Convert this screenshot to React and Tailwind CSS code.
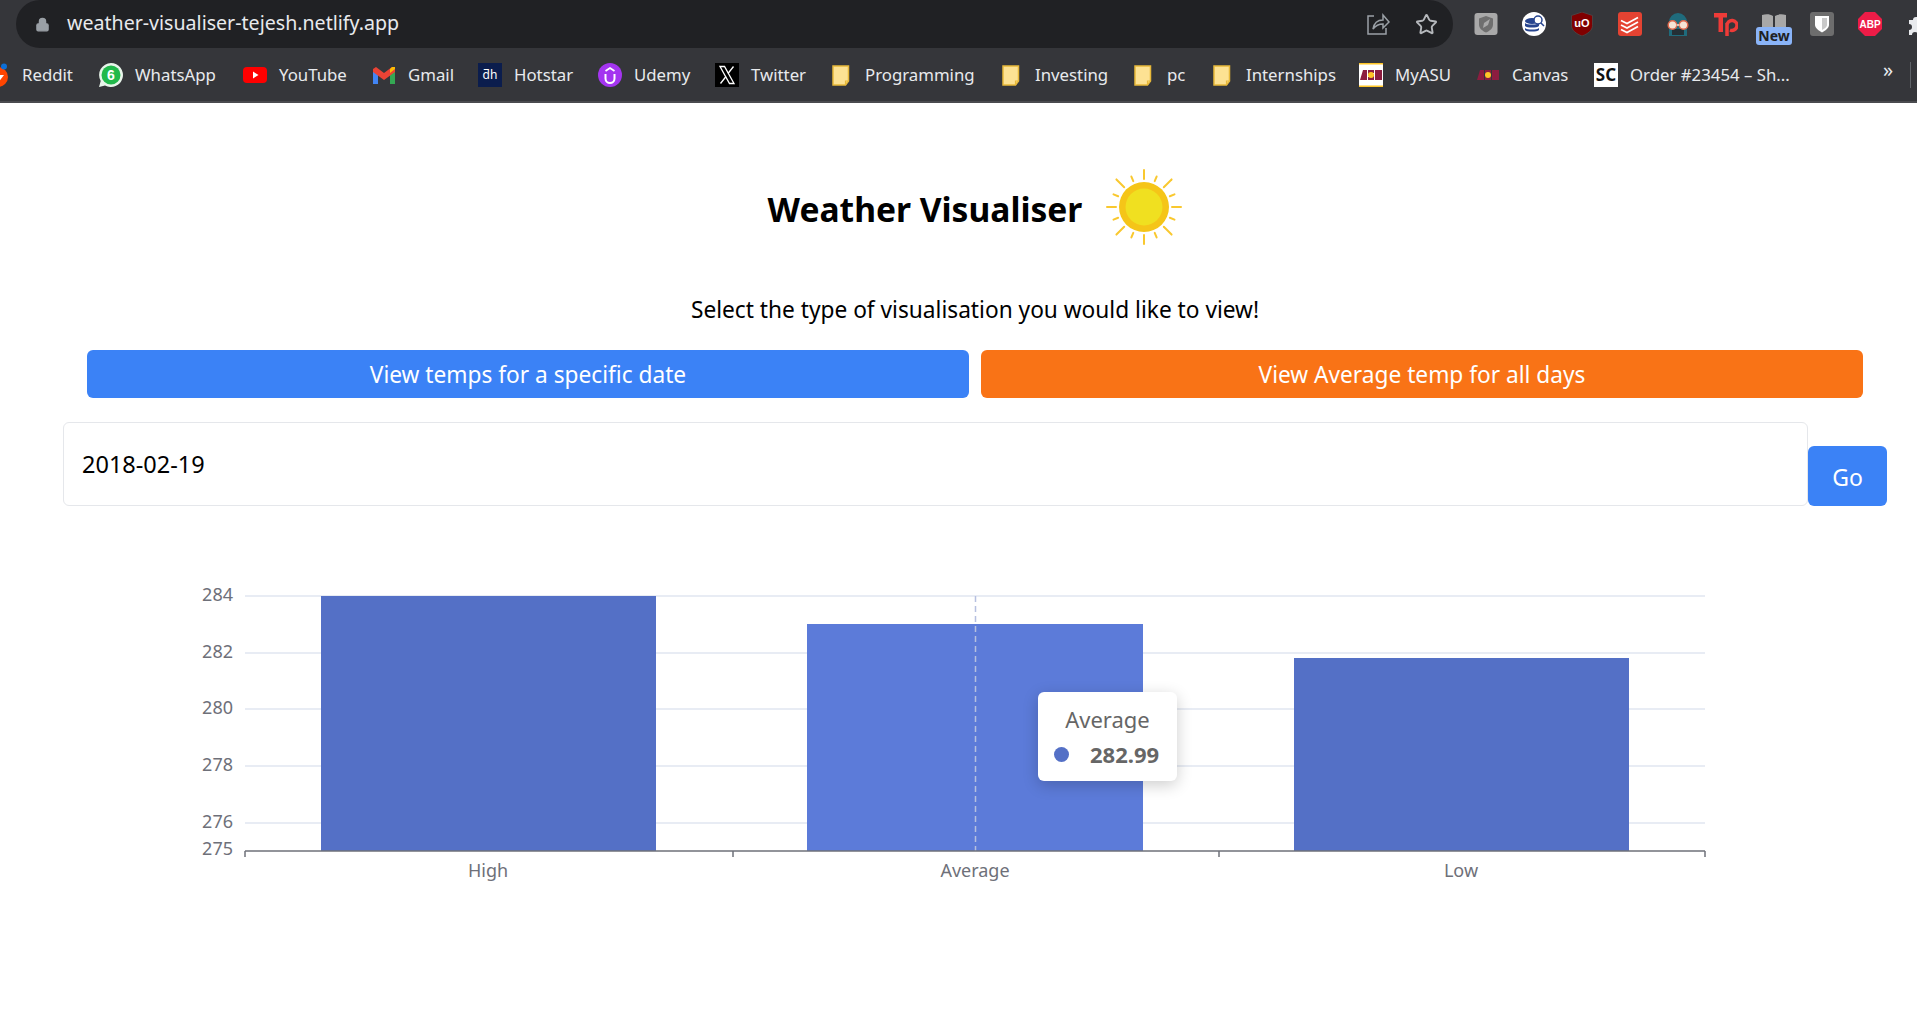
import { Star, Lock } from 'lucide-react'

const Folder = () => (
  <svg width="21" height="24" viewBox="0 0 21 24">
    <path d="M1 3h15.500v15l-3 4H1z" fill="#fde293" stroke="#e8b93a" strokeWidth="1.500" />
    <path d="M13.500 22v-4h3" fill="none" stroke="#e8b93a" strokeWidth="1.200" />
  </svg>
)

const Reddit = () => (
  <svg width="24" height="24" viewBox="0 0 24 24">
    <circle cx="12" cy="14" r="10" fill="#ff4500" />
    <path d="M6 12h12l-6 8z" fill="#fff" />
    <circle cx="18" cy="3.500" r="3" fill="#0d6fd6" />
  </svg>
)

const WhatsApp = () => (
  <svg width="24" height="24" viewBox="0 0 24 24">
    <path d="M12 0a12 12 0 1 1-6 22.400L0 24l1.700-6A12 12 0 0 1 12 0z" fill="#e8f5ea" />
    <circle cx="12" cy="12" r="9.500" fill="#21b94b" />
    <text x="12" y="17" fontSize="14" fontWeight="700" textAnchor="middle" fill="#fff" fontFamily="Liberation Sans">6</text>
  </svg>
)

const YouTube = () => (
  <svg width="24" height="24" viewBox="0 0 24 24">
    <rect x="0" y="4" width="24" height="16" rx="4" fill="#ff0000" />
    <path d="M10 8.500l5.500 3.500-5.500 3.500z" fill="#fff" />
  </svg>
)

const Gmail = () => (
  <svg width="24" height="24" viewBox="0 0 24 24">
    <path d="M1 6v15h5V10z" fill="#4285f4" />
    <path d="M23 6v15h-5V10z" fill="#34a853" />
    <path d="M1 6l3-2 8 6 8-6 3 2v3l-11 8L1 9z" fill="#ea4335" />
    <path d="M18 10l5-4V4l-3 0-2 2z" fill="#fbbc04" />
  </svg>
)

const Hotstar = () => (
  <div className="flex w-6 h-6 items-center justify-center bg-[#0b1d4d] text-[12px] leading-none text-white">ƌh</div>
)

const Udemy = () => (
  <svg width="24" height="24" viewBox="0 0 24 24">
    <circle cx="12" cy="12" r="12" fill="#a435f0" />
    <path d="M7.500 11v4.500a4.500 4.500 0 0 0 9 0V11" fill="none" stroke="#fff" strokeWidth="2" />
    <path d="M7.500 8L12 5l4.500 3" fill="none" stroke="#fff" strokeWidth="1.800" />
  </svg>
)

const XLogo = () => (
  <svg width="24" height="24" viewBox="0 0 24 24">
    <rect width="24" height="24" fill="#000" />
    <path d="M5 3.500h4.500L19 20.500h-4.500z" fill="none" stroke="#fff" strokeWidth="1.300" />
    <path d="M18.500 3.500L13 10.500M11 13.500L5.500 20.500" stroke="#fff" strokeWidth="1.300" />
  </svg>
)

const Asu = ({ box }) => (
  <svg width="24" height="24" viewBox="0 0 24 24">
    {box && <rect width="24" height="24" fill="#fff" />}
    {box && <rect width="24" height="1.500" fill="#ffc627" />}
    {box && <rect y="22.500" width="24" height="1.500" fill="#ffc627" />}
    <path d="M1 17L4 7h4v10zM9 7h6v3h-3v1h3v6H9v-3h3v-1H9zM16 7h7v10h-7z" fill="#8c1d40" />
    <circle cx="12" cy="12" r="3" fill="#ffc627" />
  </svg>
)

const ScIcon = () => (
  <div className="flex w-6 h-6 items-center justify-center bg-white text-[17px] font-bold leading-none text-[#111]">SC</div>
)

const bookmarks = [
  { label: 'Reddit', icon: <Reddit />, w: 'w-[51px]' },
  { label: 'WhatsApp', icon: <WhatsApp />, w: 'w-[82px]' },
  { label: 'YouTube', icon: <YouTube />, w: 'w-[67px]' },
  { label: 'Gmail', icon: <Gmail />, w: 'w-[44px]' },
  { label: 'Hotstar', icon: <Hotstar />, w: 'w-[58px]' },
  { label: 'Udemy', icon: <Udemy />, w: 'w-[55px]' },
  { label: 'Twitter', icon: <XLogo />, w: 'w-[55px]' },
  { label: 'Programming', icon: <Folder />, w: 'w-[111px]' },
  { label: 'Investing', icon: <Folder />, w: 'w-[73px]' },
  { label: 'pc', icon: <Folder />, w: 'w-[20px]' },
  { label: 'Internships', icon: <Folder />, w: 'w-[87px]' },
  { label: 'MyASU', icon: <Asu box />, w: 'w-[55px]' },
  { label: 'Canvas', icon: <Asu />, w: 'w-[56px]' },
  { label: 'Order #23454 – Sh...', icon: <ScIcon />, w: 'w-[163px]' },
]

const ShieldExt = () => (
  <svg width="24" height="24" viewBox="0 0 24 24">
    <rect x="0.500" y="1" width="23" height="22" rx="3" fill="#a9a9a9" />
    <path d="M12 4l7 2.500v6c0 4-3.500 6.500-7 8-3.500-1.500-7-4-7-8v-6z" fill="#6f6f6f" />
    <path d="M16 7l-6 4-1 5 5-3z" fill="#a9a9a9" />
  </svg>
)

const DbExt = () => (
  <svg width="24" height="24" viewBox="0 0 24 24">
    <circle cx="12" cy="12" r="12" fill="#fff" />
    <ellipse cx="10" cy="9" rx="7" ry="3" fill="#27458f" />
    <path d="M3 11c2 2 12 2 14 0v3c-2 2-12 2-14 0zM3 16c2 2 12 2 14 0v2c-2 2-12 2-14 0z" fill="#27458f" />
    <circle cx="16" cy="8" r="4" fill="#fff" stroke="#27458f" strokeWidth="1.500" />
    <path d="M19 11l3 3" stroke="#27458f" strokeWidth="1.500" />
  </svg>
)

const UblockExt = () => (
  <svg width="24" height="24" viewBox="0 0 24 24">
    <path d="M12 0l10.500 3.500v10c0 5-5 8.500-10.500 10.500C6.500 22 1.500 18.500 1.500 13.500v-10z" fill="#800000" stroke="#4a4a4a" strokeWidth="0.800" />
    <text x="12" y="15" fontSize="11" fontWeight="700" textAnchor="middle" fill="#fff" fontFamily="Liberation Sans">uO</text>
  </svg>
)

const TodoistExt = () => (
  <svg width="24" height="24" viewBox="0 0 24 24">
    <rect width="24" height="24" rx="3" fill="#e44332" />
    <path d="M3 8.500l6 3 11-6M3 13l6 3 11-6M3 17.500l6 3 11-6" fill="none" stroke="#fff" strokeWidth="1.800" />
  </svg>
)

const GlassesExt = () => (
  <svg width="24" height="24" viewBox="0 0 24 24">
    <path d="M3 24V10a9 9 0 0 1 18 0v14z" fill="#1f6b7c" />
    <rect x="6" y="17" width="12" height="6" fill="#243036" />
    <circle cx="6.500" cy="13" r="4.300" fill="#f5e4d5" stroke="#e0684c" strokeWidth="1.500" />
    <circle cx="17.500" cy="13" r="4.300" fill="#f5e4d5" stroke="#e0684c" strokeWidth="1.500" />
    <path d="M10.500 13h3" stroke="#f5e4d5" strokeWidth="1.500" />
  </svg>
)

const TpExt = () => (
  <svg width="24" height="24" viewBox="0 0 24 24">
    <path d="M0 1h13v4.500H9V20H4.500V5.500H0z" fill="#ee3b38" />
    <path d="M13 13.500a5 5 0 1 1 3 4.500M13 11V24" fill="none" stroke="#ee3b38" strokeWidth="3.500" />
  </svg>
)

const BookExt = () => (
  <div className="relative w-6 h-6">
    <svg width="24" height="14" viewBox="0 0 24 14" className="absolute top-[2px] left-0">
      <path d="M0 1c4-1 8-1 11 1v12H0zM24 1c-4-1-8-1-11 1v12h11z" fill="#a8a8a8" />
    </svg>
    <div className="absolute left-[-6px] top-[15px] flex w-[36px] h-[18px] items-center justify-center rounded-[3px] bg-[#8ab4f8] text-[14px] font-bold leading-none text-[#202124]">New</div>
  </div>
)

const BitwardenExt = () => (
  <svg width="24" height="24" viewBox="0 0 24 24">
    <rect width="24" height="24" rx="3" fill="#6d6d6d" />
    <path d="M5 4h14v9c0 3-4 6-7 7.500C9 19 5 16 5 13z" fill="#fff" />
    <path d="M12 6h5v7c0 2-3 4-5 5z" fill="#c9c9c9" />
  </svg>
)

const AbpExt = () => (
  <svg width="24" height="24" viewBox="0 0 24 24">
    <path d="M7 0h10l7 7v10l-7 7H7l-7-7V7z" fill="#ed1c47" />
    <text x="12" y="16" fontSize="10" fontWeight="700" textAnchor="middle" fill="#fff" fontFamily="Liberation Sans">ABP</text>
  </svg>
)

const PuzzleExt = () => (
  <svg width="24" height="24" viewBox="0 0 24 24">
    <path d="M3 8h4a3 3 0 0 1 6 0h5v5a3 3 0 0 1 0 6v4h-6a3 3 0 0 0-6 0H3v-5a3 3 0 0 0 0-6z" fill="#e8eaed" />
  </svg>
)

const ShareIcon = () => (
  <svg width="24" height="24" viewBox="0 0 24 24" fill="none" stroke="#9aa0a6" strokeWidth="1.500">
    <path d="M8 4H2v18h18v-6" />
    <path d="M7 17c1-6 5-9 10-9V3l6 7-6 6v-4c-4 0-7 1-10 5z" />
  </svg>
)

const Sun = () => {
  const long = [0, 45, 90, 135, 180, 225, 270, 315]
  const short = [22.5, 67.5, 112.5, 157.5, 202.5, 247.5, 292.5, 337.5]
  return (
    <svg width="76" height="76" viewBox="-38 -38 76 76">
      {long.map((a) => (
        <line key={a} x1="0" y1="-28" x2="0" y2={a % 90 === 0 ? -37 : -39} stroke="#f9c82f" strokeWidth="2" strokeLinecap="round" transform={`rotate(${a})`} />
      ))}
      {short.map((a) => (
        <line key={a} x1="0" y1="-28" x2="0" y2="-33" stroke="#f9c82f" strokeWidth="2" strokeLinecap="round" transform={`rotate(${a})`} />
      ))}
      <circle r="25" fill="#f5c518" />
      <circle r="18.500" fill="#f0e020" />
    </svg>
  )
}

const grid = [
  { y: 596, label: '284' },
  { y: 653, label: '282' },
  { y: 709, label: '280' },
  { y: 766, label: '278' },
  { y: 823, label: '276' },
]

// chart svg starts at page y=560, so everything is shifted by that
const top = 560

const Chart = () => (
  <svg width="1950" height="340" viewBox={`0 ${top} 1950 340`} fontFamily="Noto Sans, sans-serif" className="block">
    {grid.map((g) => (
      <g key={g.label}>
        <line x1="245" x2="1705" y1={g.y} y2={g.y} stroke="#e0e6f1" strokeWidth="1.500" />
        <text x="233" y={g.y + 4.500} textAnchor="end" fontSize="18" fill="#6e7079">{g.label}</text>
      </g>
    ))}
    <text x="233" y="855" textAnchor="end" fontSize="18" fill="#6e7079">275</text>
    <rect x="321" y="596" width="335" height="255" fill="#5470c6" />
    <rect x="807" y="624" width="336" height="227" fill="#5c7bd9" />
    <rect x="1294" y="658" width="335" height="193" fill="#5470c6" />
    <line x1="975.500" x2="975.500" y1="596" y2="851" stroke="#b6c0e0" strokeWidth="1.500" strokeDasharray="6 4" />
    <line x1="245" x2="1705" y1="851" y2="851" stroke="#6e7079" strokeWidth="1.500" />
    {[245, 733, 1219, 1705].map((x) => (
      <line key={x} x1={x} x2={x} y1="851" y2="857" stroke="#6e7079" strokeWidth="1.500" />
    ))}
    <text x="488" y="877" textAnchor="middle" fontSize="18" fill="#6e7079">High</text>
    <text x="975" y="877" textAnchor="middle" fontSize="18" fill="#6e7079">Average</text>
    <text x="1461" y="877" textAnchor="middle" fontSize="18" fill="#6e7079">Low</text>
  </svg>
)

export default function App() {
  return (
    <div className="w-[1917px] h-[1009px] overflow-hidden bg-white font-['Noto_Sans',sans-serif]">
      {/* browser chrome */}
      <div className="bg-[#35363a] border-b-2 border-[#4a4b4f]">
        <div className="flex h-[48px]">
          <div className="ml-[16px] flex w-[1437px] h-[48px] shrink-0 items-center rounded-[24px] bg-[#202124] pl-[19px] pr-[15px] text-[#e8eaed]">
            <Lock size={15} className="fill-[#9aa0a6] text-[#9aa0a6]" />
            <span className="ml-[17px] mb-[2px] text-[19.600px] leading-none">weather-visualiser-tejesh.netlify.app</span>
            <div className="ml-auto flex items-center gap-[25px]">
              <ShareIcon />
              <Star size={23} className="text-[#b5b8bc]" />
            </div>
          </div>
          <div className="ml-[21px] flex shrink-0 items-center gap-[24px]">
            <ShieldExt />
            <DbExt />
            <UblockExt />
            <TodoistExt />
            <GlassesExt />
            <TpExt />
            <BookExt />
            <BitwardenExt />
            <AbpExt />
            <PuzzleExt />
          </div>
        </div>
        <div className="relative flex h-[53px] items-center gap-[26px] -ml-[14px] text-[16.800px] text-[#e8eaed]">
          {bookmarks.map((b) => (
            <div key={b.label} className="flex items-center gap-[12px]">
              {b.icon}
              <span className={`${b.w} whitespace-nowrap`}>{b.label}</span>
            </div>
          ))}
          <span className="absolute left-[1897px] top-[12px] text-[20px] leading-none">»</span>
          <div className="absolute left-[1924px] top-[14px] w-px h-[26px] bg-[#5f6368]" />
        </div>
      </div>

      {/* page, a bit wider than the visible window */}
      <div className="relative w-[1950px]">
        <div className="flex items-center justify-center gap-[24px] pt-[66px]">
          <h1 className="mt-[5px] text-[33.600px] font-bold leading-none text-black">Weather Visualiser</h1>
          <Sun />
        </div>
        <p className="mt-[49px] text-center text-[22.700px] leading-[32px] text-black">
          Select the type of visualisation you would like to view!
        </p>
        <div className="mt-[24px] flex gap-[12px] px-[87px]">
          <button className="flex-1 h-[48px] rounded-md bg-[#3b82f6] pt-[3px] text-[22.700px] text-white">View temps for a specific date</button>
          <button className="flex-1 h-[48px] rounded-md bg-[#f97316] pt-[3px] text-[22.700px] text-white">View Average temp for all days</button>
        </div>
        <div className="mt-[24px] flex items-end px-[63px]">
          <input
            type="text"
            readOnly
            value="2018-02-19"
            className="flex-1 h-[84px] rounded-md border border-gray-200 px-[18px] text-[23.500px] text-black outline-none"
          />
          <button className="w-[79px] h-[60px] rounded-md bg-[#3b82f6] pt-[3px] text-[23px] text-white">Go</button>
        </div>
        <div className="relative mt-[54px]">
          <Chart />
          <div className="absolute left-[1038px] top-[132px] w-[139px] h-[89px] rounded-[6px] bg-white shadow-[0_4px_16px_rgba(0,0,0,0.2)]">
            <div className="mt-[12px] text-center text-[22px] leading-[30px] text-[#666]">Average</div>
            <div className="mt-[5px] flex items-center pl-[16px]">
              <span className="w-[15px] h-[15px] rounded-full bg-[#5470c6]" />
              <span className="ml-[21px] text-[22px] font-bold leading-[30px] text-[#666]">282.99</span>
            </div>
          </div>
        </div>
      </div>
    </div>
  )
}
